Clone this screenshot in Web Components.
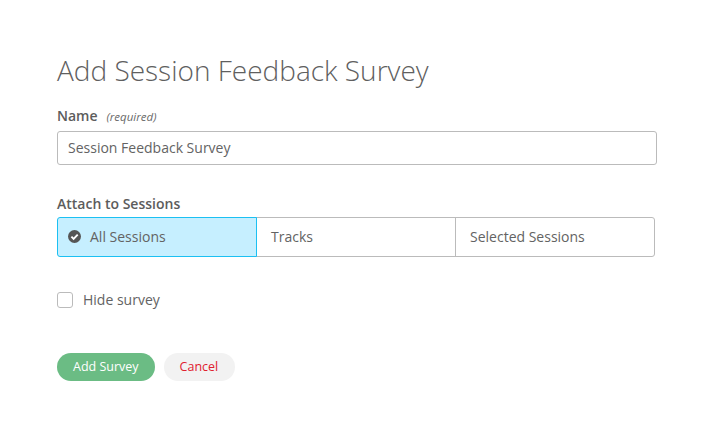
<!DOCTYPE html>
<html>
<head>
<meta charset="utf-8">
<title>Add Session Feedback Survey</title>
<style>
  html, body { margin: 0; padding: 0; background: #fff; }
  body { font-family: "Open Sans", sans-serif; color: #555; }
</style>
</head>
<body>
<survey-form></survey-form>

<script>
class FieldLabel extends HTMLElement {
    constructor() {
        super();
        this.attachShadow({ mode: 'open' });
        this.shadowRoot.innerHTML = `
            <style>
                :host { display: block; font-size: 14px; line-height: 20px; font-weight: 600; color: #5c5c5c; }
                em { font-size: 11.5px; font-weight: 400; margin-left: 9px; color: #6a6a6a; }
            </style>
            <slot></slot>${this.getAttribute('hint') ? `<em>${this.getAttribute('hint')}</em>` : ''}
        `;
    }
}

class TextField extends HTMLElement {
    constructor() {
        super();
        this.attachShadow({ mode: 'open' });
        this.shadowRoot.innerHTML = `
            <style>
                :host {
                    display: block; box-sizing: border-box; width: 600px; height: 34px;
                    border: 1px solid #bbb; border-radius: 3px; padding: 0 10px;
                    font-size: 14px; line-height: 32px; color: #636363;
                }
            </style>
            <slot></slot>
        `;
    }
}

class SegmentPicker extends HTMLElement {
    constructor() {
        super();
        this.attachShadow({ mode: 'open' });
        this.shadowRoot.innerHTML = `
            <style>
                :host { display: flex; width: 598px; height: 40px; box-sizing: border-box; }
            </style>
            <slot></slot>
        `;
    }
}

class SegmentOption extends HTMLElement {
    constructor() {
        super();
        this.attachShadow({ mode: 'open' });
        const selected = this.hasAttribute('selected');
        this.shadowRoot.innerHTML = `
            <style>
                :host {
                    display: flex; align-items: center; gap: 9px; flex: none; width: 200px; box-sizing: border-box;
                    height: 40px; padding: 0 14px 2px; margin-left: -1px;
                    border: 1px solid #bbb; font-size: 14px; color: #636363;
                }
                :host(:first-child) { margin-left: 0; border-radius: 3px 0 0 3px; padding-left: 10px; }
                :host(:last-child) { border-radius: 0 3px 3px 0; }
                :host([selected]) { background: #c6efff; border-color: #1cc0f2; position: relative; z-index: 1; }
                svg { width: 13px; height: 13px; flex: none; }
            </style>
            ${selected ? `<svg viewBox="0 0 13 13"><circle cx="6.5" cy="6.5" r="6.5" fill="#555"/><path d="M3.4 6.7 5.6 8.9 9.7 4.7" fill="none" stroke="#fff" stroke-width="1.9"/></svg>` : ''}
            <slot></slot>
        `;
    }
}

class CheckField extends HTMLElement {
    constructor() {
        super();
        this.attachShadow({ mode: 'open' });
        this.shadowRoot.innerHTML = `
            <style>
                :host { display: flex; align-items: center; gap: 10px; font-size: 14px; line-height: 16px; color: #636363; }
                i { display: block; box-sizing: border-box; width: 16px; height: 16px; border: 1px solid #bbb; border-radius: 3px; background: #fff; }
            </style>
            <i></i><slot></slot>
        `;
    }
}

class PillButton extends HTMLElement {
    constructor() {
        super();
        this.attachShadow({ mode: 'open' });
        this.shadowRoot.innerHTML = `
            <style>
                :host {
                    display: inline-block; height: 28px; padding: 0 16px; border-radius: 14px;
                    font-size: 12.5px; line-height: 28px; background: #f2f2f2; color: #e0202f;
                }
                :host(:last-child) { padding-right: 17px; }
                :host([primary]) { background: #6bbc84; color: #fff; }
            </style>
            <slot></slot>
        `;
    }
}

class SurveyForm extends HTMLElement {
    constructor() {
        super();
        this.attachShadow({ mode: 'open' });
        this.shadowRoot.innerHTML = `
            <style>
                :host { display: block; padding: 49px 0 0 57px; font-family: "Open Sans", sans-serif; }
                h1 { margin: 0 0 15px; font-size: 28px; line-height: 42px; font-weight: 300; color: #5f5f5f; }
                field-label { margin-bottom: 5px; }
                .name field-label { margin-bottom: 4px; }
                .attach { margin-top: 29px; }
                .attach field-label { margin-bottom: 3px; }
                check-field { margin-top: 35px; }
                .actions { display: flex; gap: 9px; margin-top: 45px; }
            </style>
            <h1>Add Session Feedback Survey</h1>
            <div class="name">
                <field-label hint="(required)">Name</field-label>
                <text-field>Session Feedback Survey</text-field>
            </div>
            <div class="attach">
                <field-label>Attach to Sessions</field-label>
                <segment-picker>
                    <segment-option selected>All Sessions</segment-option>
                    <segment-option>Tracks</segment-option>
                    <segment-option>Selected Sessions</segment-option>
                </segment-picker>
            </div>
            <check-field>Hide survey</check-field>
            <div class="actions">
                <pill-button primary>Add Survey</pill-button>
                <pill-button>Cancel</pill-button>
            </div>
        `;
    }
}

customElements.define('field-label', FieldLabel);
customElements.define('text-field', TextField);
customElements.define('segment-picker', SegmentPicker);
customElements.define('segment-option', SegmentOption);
customElements.define('check-field', CheckField);
customElements.define('pill-button', PillButton);
customElements.define('survey-form', SurveyForm);
</script>
</body>
</html>
